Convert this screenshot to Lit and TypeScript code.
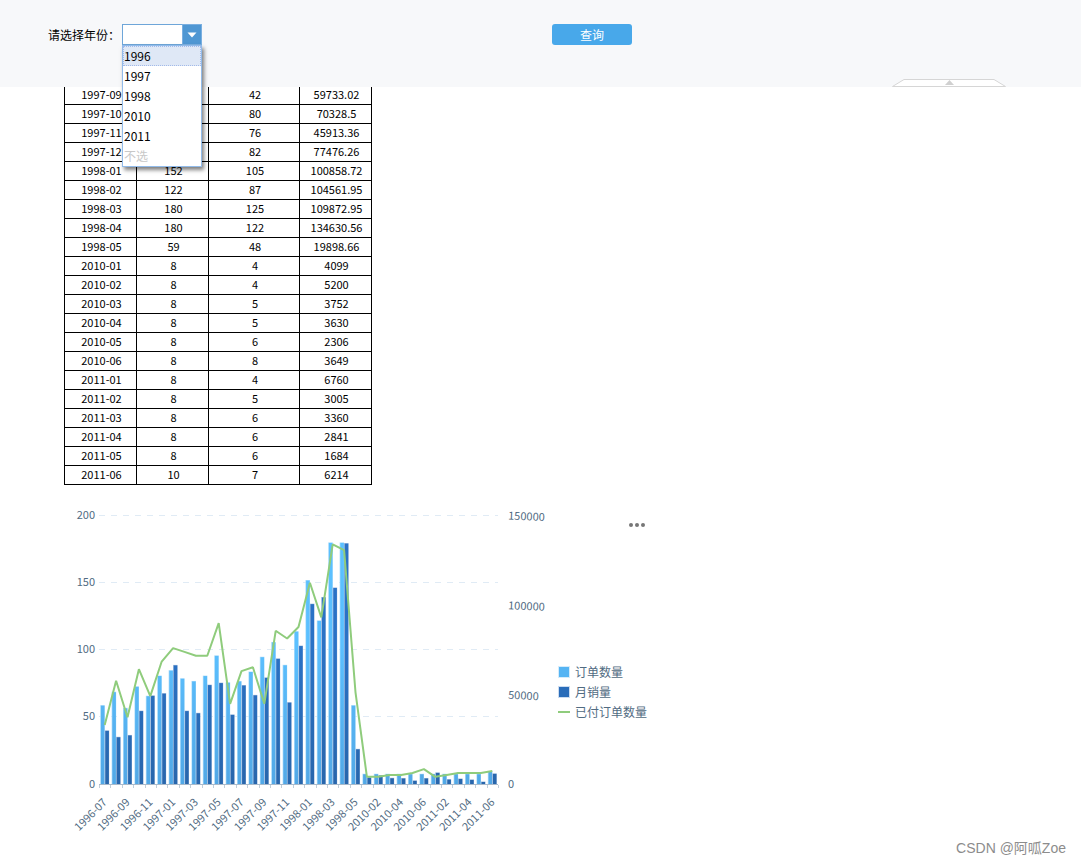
import { LitElement, html, svg, css } from "lit";
import { customElement, state, property } from "lit/decorators.js";
import { classMap } from "lit/directives/class-map.js";

type Row = [month: string, orders: number, paid: number, sales: number];

const ROWS: Row[] = [
  ["1996-07", 59, 31, 30192.1],
  ["1996-08", 69, 54, 26609.4],
  ["1996-09", 57, 35, 27636],
  ["1996-10", 73, 60, 41203.6],
  ["1996-11", 66, 46, 49704],
  ["1996-12", 81, 64, 50953.4],
  ["1997-01", 85, 71, 66692.8],
  ["1997-02", 79, 69, 41207.2],
  ["1997-03", 77, 67, 39979.9],
  ["1997-04", 81, 67, 55699.39],
  ["1997-05", 96, 84, 56823.7],
  ["1997-06", 76, 42, 39088],
  ["1997-07", 77, 59, 55464.93],
  ["1997-08", 84, 61, 49981.69],
  ["1997-09", 95, 42, 59733.02],
  ["1997-10", 106, 80, 70328.5],
  ["1997-11", 89, 76, 45913.36],
  ["1997-12", 114, 82, 77476.26],
  ["1998-01", 152, 105, 100858.72],
  ["1998-02", 122, 87, 104561.95],
  ["1998-03", 180, 125, 109872.95],
  ["1998-04", 180, 122, 134630.56],
  ["1998-05", 59, 48, 19898.66],
  ["2010-01", 8, 4, 4099],
  ["2010-02", 8, 4, 5200],
  ["2010-03", 8, 5, 3752],
  ["2010-04", 8, 5, 3630],
  ["2010-05", 8, 6, 2306],
  ["2010-06", 8, 8, 3649],
  ["2011-01", 8, 4, 6760],
  ["2011-02", 8, 5, 3005],
  ["2011-03", 8, 6, 3360],
  ["2011-04", 8, 6, 2841],
  ["2011-05", 8, 6, 1684],
  ["2011-06", 10, 7, 6214],
];

const YEARS = ["1996", "1997", "1998", "2010", "2011"];

@customElement("year-picker")
class YearPicker extends LitElement {
  @state() private open = true;
  @state() private value = "";
  @state() private active = "1996";

  static styles = css`
    :host { display: block; }
    .field { display: flex; align-items: center; font-size: 12px; }
    .label { width: 74px; line-height: 21px; white-space: nowrap; color: #000; }
    .combo { position: relative; display: flex; width: 80px; height: 21px; }
    .input {
      flex: 1; min-width: 0; box-sizing: border-box; height: 21px; padding: 0 2px;
      border: 1px solid #6ea6d9; border-right: 0; background: #fff; font: inherit; outline: none;
    }
    .toggle {
      width: 20px; height: 21px; padding: 0; border: 1px solid #7aafe0; background: #4f97d3;
      display: flex; align-items: center; justify-content: center; cursor: pointer;
    }
    .menu {
      position: absolute; top: 21px; left: 0; right: 0; border: 1px solid #92bbea;
      background: #fff; box-shadow: 2px 3px 4px rgba(0, 0, 0, 0.5); box-sizing: border-box;
    }
    .option {
      display: block; width: 100%; height: 20px; box-sizing: border-box; padding: 0;
      border: 1px dotted transparent; background: none; font: inherit; line-height: 18px;
      text-align: left; color: #000; cursor: pointer;
    }
    .option.active { background: #dfe8f6; border-color: #a3bae9; }
    .option.none { color: #c8c8c8; }
  `;

  private pick(value: string) {
    this.value = value;
    this.open = false;
  }

  render() {
    return html`
      <div class="field">
        <label class="label" for="year">请选择年份：</label>
        <div class="combo">
          <input class="input" id="year" role="combobox" aria-expanded=${this.open} aria-controls="years"
            autocomplete="off" .value=${this.value} />
          <button class="toggle" type="button" aria-label="展开年份" @click=${() => (this.open = !this.open)}>
            <svg width="10" height="6" viewBox="0 0 10 6"><path d="M0.5 0.5h9L5 5.5z" fill="#fff" /></svg>
          </button>
          ${this.open
            ? html`<div class="menu" id="years" role="listbox">
                ${YEARS.map(
                  (y) => html`<button type="button" role="option"
                    class=${classMap({ option: true, active: y === this.active })}
                    @mouseenter=${() => (this.active = y)} @click=${() => this.pick(y)}>${y}</button>`
                )}
                <button type="button" role="option" class="option none" @click=${() => this.pick("")}>不选</button>
              </div>`
            : null}
        </div>
      </div>
    `;
  }
}

const LEFT = 35;
const BAND = 11.4;
const BASE = 279.5;
const PLOT = 269;

@customElement("sales-chart")
class SalesChart extends LitElement {
  @property({ attribute: false }) rows: Row[] = [];

  static styles = css`
    :host { display: flex; color: #516b82; font-size: 12px; }
    .plot { flex: none; display: block; }
    .tick { font-size: 11px; fill: #516b82; }
    .side { display: flex; flex-direction: column; justify-content: space-between; width: 91px; height: 217px; padding-top: 16px; box-sizing: border-box; }
    .more { align-self: flex-end; display: block; width: 24px; height: 8px; padding: 0 4px; margin: 0; border: 0; background: none; cursor: pointer; }
    .more svg { display: block; }
    .legend { list-style: none; margin: 0; padding: 0; }
    .item { display: flex; align-items: center; gap: 5px; height: 20px; line-height: 20px; white-space: nowrap; }
    .item svg { flex: none; }
  `;

  private bar(x: number, width: number, share: number, kind: "orders" | "sales") {
    const h = share * PLOT;
    const y = BASE - h;
    const edge = kind === "orders" ? "#b4dffb" : "#a9c1e0";
    return svg`
      <rect x=${x} y=${y} width=${width} height=${h} fill=${edge} />
      <rect x=${x + 0.7} y=${y + 0.5} width=${width - 1} height=${Math.max(h - 0.5, 0)} fill="url(#${kind})" />`;
  }

  render() {
    const right = LEFT + BAND * this.rows.length;
    const mid = (i: number) => LEFT + BAND * (i + 0.5);
    const line = this.rows.map((r, i) => `${mid(i)},${BASE - (r[2] / 140) * PLOT}`).join(" ");
    return html`
      <svg class="plot" width="494" height="340" viewBox="0 0 494 340" role="img" aria-label="订单数量、月销量、已付订单数量">
        <defs>
          <linearGradient id="orders" gradientUnits="userSpaceOnUse" x1="0" y1="140" x2="0" y2="280">
            <stop offset="0" stop-color="#5bc0ff" /><stop offset="1" stop-color="#52a8e6" />
          </linearGradient>
          <linearGradient id="sales" gradientUnits="userSpaceOnUse" x1="0" y1="140" x2="0" y2="280">
            <stop offset="0" stop-color="#2a72c6" /><stop offset="1" stop-color="#2866ac" />
          </linearGradient>
        </defs>
        ${[50, 100, 150, 200].map((v) => {
          const y = Math.floor(BASE - (v / 200) * PLOT - 0.5) + 0.5;
          return svg`<line x1=${LEFT} x2=${right} y1=${y} y2=${y} stroke="#e0ebf5" stroke-dasharray="6 6" />`;
        })}
        ${[0, 50, 100, 150, 200].map(
          (v) => svg`<text class="tick" x="31" y=${BASE - (v / 200) * PLOT + 3} text-anchor="end">${v}</text>`
        )}
        ${[0, 50000, 100000, 150000].map((v) => {
          const y = BASE - (v / 150000) * PLOT + (v ? 4 : 3);
          return svg`<text class="tick" x="444" y=${y} transform="rotate(${v ? 2.5 : 0} 444 ${y})">${v}</text>`;
        })}
        ${this.rows.map((r, i) => [
          this.bar(LEFT + BAND * i + 1.2, 4.6, r[1] / 200, "orders"),
          this.bar(LEFT + BAND * i + 5.6, 4.6, r[3] / 150000, "sales"),
        ])}
        <line x1=${LEFT} x2=${right} y1=${BASE} y2=${BASE} stroke="#a9bacb" />
        ${Array.from({ length: this.rows.length + 1 }, (_, i) => {
          const x = Math.round(LEFT + BAND * i) + 0.5;
          return svg`<line x1=${x} x2=${x} y1="280" y2="283" stroke="#c3cfda" />`;
        })}
        <polyline points=${line} fill="none" stroke="#8fcc7c" stroke-width="2" stroke-linejoin="bevel" />
        ${this.rows.map((r, i) =>
          i % 2
            ? null
            : svg`<text class="tick" x=${mid(i) + 3} y="298" text-anchor="end"
                transform="rotate(-45 ${mid(i) + 3} 298)">${r[0]}</text>`
        )}
      </svg>
      <div class="side">
        <button class="more" type="button" aria-label="更多">
          <svg width="16" height="8" viewBox="0 0 16 8" fill="#777">
            <circle cx="2" cy="4" r="2" /><circle cx="8" cy="4" r="2" /><circle cx="14" cy="4" r="2" />
          </svg>
        </button>
        <ul class="legend">
          <li class="item">
            <svg width="12" height="12"><rect x="0.5" y="0.5" width="11" height="11" fill="#55b4f3" stroke="#d5ecfb" /></svg>订单数量
          </li>
          <li class="item">
            <svg width="12" height="12"><rect x="0.5" y="0.5" width="11" height="11" fill="#296cb9" stroke="#ccdcf0" /></svg>月销量
          </li>
          <li class="item">
            <svg width="12" height="12"><path d="M0 6h12" stroke="#8fcc7c" stroke-width="2" /></svg>已付订单数量
          </li>
        </ul>
      </div>
    `;
  }
}

@customElement("app-root")
class AppRoot extends LitElement {
  static styles = css`
    :host {
      display: flex; flex-direction: column; min-height: 100vh; background: #fff; color: #000;
      font-family: "Noto Sans CJK SC", "Liberation Sans", sans-serif; font-size: 12px;
    }
    .toolbar {
      position: relative; z-index: 1; display: flex; gap: 350px;
      padding: 24px 48px 42px; background: #f7f8fa;
    }
    .query {
      width: 80px; height: 21px; padding: 0; border: 0; border-radius: 3px; background: #48a8ea;
      color: #fff; font: inherit; line-height: 21px; cursor: pointer;
    }
    .collapse {
      position: absolute; right: 75px; bottom: 0; width: 114px; height: 8px; padding: 0;
      border: 0; background: none; cursor: pointer;
    }
    .collapse svg { display: block; }
    .report { flex: 1; overflow: hidden; padding-left: 64px; }
    .grid { border-collapse: collapse; table-layout: fixed; width: 308px; margin: -2px 0 20px; font-size: 11px; }
    .narrow { width: 72px; }
    .wide { width: 91px; }
    .cell {
      height: 18px; padding: 0 0 0 2px; border: 1px solid #000; line-height: 16px;
      vertical-align: top; text-align: center; color: #000;
    }
    .mark {
      align-self: flex-end; margin: -24px 15px 7px 0; line-height: 17px; font-size: 14px;
      font-family: "Liberation Sans", "Noto Sans CJK SC", sans-serif; color: #8c8c8c;
    }
  `;

  render() {
    return html`
      <header class="toolbar">
        <year-picker></year-picker>
        <button class="query" type="button">查询</button>
        <button class="collapse" type="button" aria-label="收起">
          <svg width="114" height="8" viewBox="0 0 114 8">
            <path d="M0.5 7.5L12 0.5H102L113.5 7.5z" fill="#fff" stroke="#d6d6d6" />
            <path d="M53 6l4.5-5 4.5 5z" fill="#d0d0d0" />
          </svg>
        </button>
      </header>
      <main class="report">
        <table class="grid">
          <colgroup><col class="narrow" /><col class="narrow" /><col class="wide" /><col class="narrow" /></colgroup>
          <tbody>
            ${ROWS.slice(14).map(
              (r) => html`<tr>${r.map((v) => html`<td class="cell">${v}</td>`)}</tr>`
            )}
          </tbody>
        </table>
        <sales-chart .rows=${ROWS}></sales-chart>
      </main>
      <footer class="mark">CSDN @阿呱Zoe</footer>
    `;
  }
}
